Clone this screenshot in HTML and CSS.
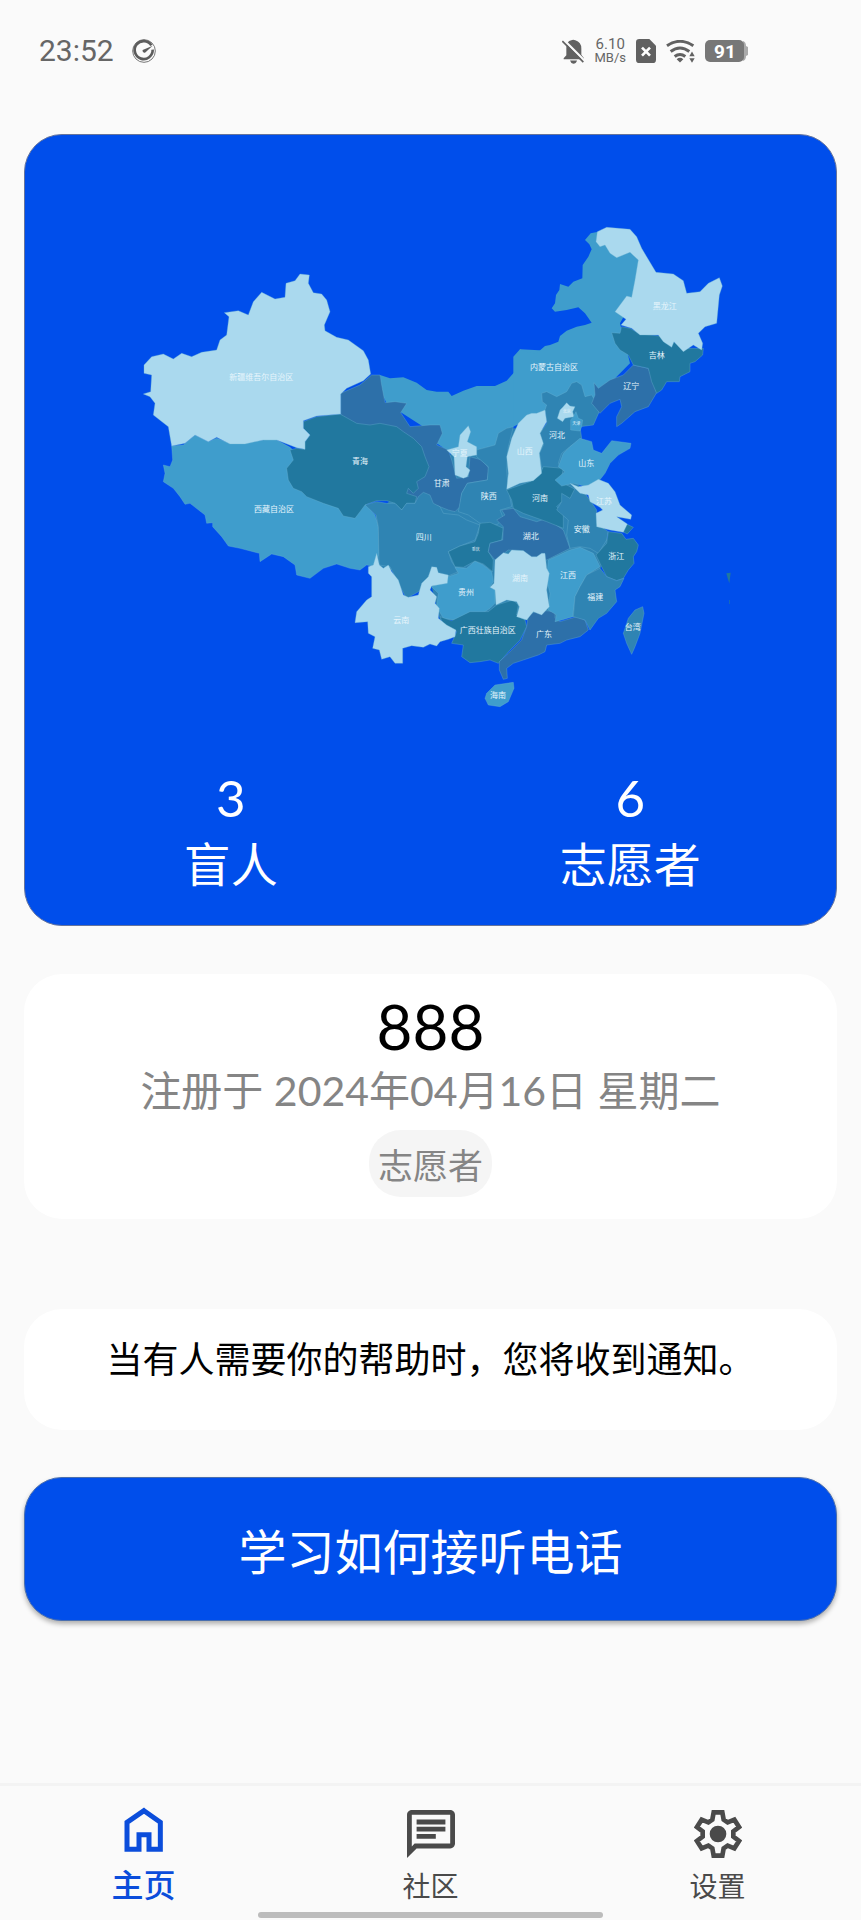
FILE: index.html
```html
<!DOCTYPE html>
<html lang="zh-CN">
<head>
<meta charset="utf-8">
<meta name="viewport" content="width=device-width, initial-scale=1">
<title>主页</title>
<link rel="stylesheet" href="styles.css">
</head>
<body>
<div class="screen">
  <header class="status">
    <time class="clock">23:52</time>
    <svg class="gauge" viewBox="0 0 72 72" aria-hidden="true">
      <circle cx="36" cy="36" r="34" fill="none" stroke="#777" stroke-width="3"/>
      <path d="M58 19A27 27 0 1 0 62 32" fill="none" stroke="#5c5c5c" stroke-width="8"/>
      <path d="M32 33L62 20L39 41A6 6 0 0 1 32 33Z" fill="#5c5c5c"/>
    </svg>
    <div class="indicators">
      <svg class="bell" viewBox="0 0 66 74" aria-hidden="true">
        <path d="M5 57L13 48V26Q13 6 28 3Q33 0 40 3Q58 8 58 28V47L66 57V60H5ZM24 64H45Q42 74 34 74Q27 73 24 64Z" fill="#616161"/>
        <path d="M4 1L66 63" stroke="#fafafa" stroke-width="7"/>
        <path d="M1 6L64 69" stroke="#616161" stroke-width="5"/>
      </svg>
      <div class="speed"><span class="rate">6.10</span><span class="unit">MB/s</span></div>
      <svg class="sim" viewBox="0 0 60 72" aria-hidden="true">
        <path d="M10 0H40L60 20V62Q60 72 50 72H10Q0 72 0 62V10Q0 0 10 0Z" fill="#616161"/>
        <path d="M18 26L42 50M42 26L18 50" stroke="#fff" stroke-width="8"/>
      </svg>
      <svg class="wifi" viewBox="0 0 87 68" aria-hidden="true">
        <path d="M3 17Q42-10 82 17M14 34Q42 13 70 34M26 49Q42 37 58 49" fill="none" stroke="#616161" stroke-width="9"/>
        <path d="M32 57Q42 49 52 57L42 67ZM70 48L78 34L86 48ZM70 54H86L78 68Z" fill="#616161"/>
      </svg>
      <svg class="battery" viewBox="0 0 43 22" role="img" aria-label="91%">
        <path d="M38 1Q41 2 41 6L43 7V15L41 16Q41 20 38 21Z" fill="#aaa"/>
        <rect width="39" height="22" rx="5" fill="#777"/>
        <text x="20" y="18" text-anchor="middle" class="charge">91</text>
      </svg>
    </div>
  </header>

  <main class="content">
    <section class="map-card">
      <svg class="map" viewBox="0 0 1830 1530" role="img" aria-label="中国地图">
        <g class="regions">
          <g transform="translate(750 450)">
            <path class="steel bare" d="M100 350L250 260 400 205 600 210 545 320 610 390 670 500 690 560 650 650 590 770 450 780 180 780 150 660-5 620-12 465Z"/>
            <path class="sky bare" d="M420-32L413 0 420 25 400 40 380 62 345 78 290 78 250 92 215 108 205 95 170 95 140 90 110 68 70 52 30 55 0 45 5 100 20 130 60 155 130 200 170 250 200 270 290 270 350 255 400 200 500 150 600 140 700 50 650-20Z"/>
          </g>
          <g transform="translate(1170 0)">
            <path class="sky bare" d="M235 65L212 70 195 90 208 103 215 118 205 140 188 165 187 205 160 215 145 230 120 222 118 240 108 255 105 280 95 295 105 305 140 300 175 292 195 310 215 338 195 345 170 350 140 362 120 378 115 395 90 405 75 408 50 430 25 428 0 418-20 440V640L100 600 210 570 230 560 330 460 300 340 350 250 360 140Z"/>
          </g>
          <g transform="translate(0 150)">
            <path class="sky" d="M125 558L160 555 195 525 235 545 260 535 300 550 340 550 400 540 440 540 480 562 520 600 660 700 710 735 735 765 745 800 747 880 735 920 710 915 690 930 660 925 620 912 580 925 540 955 500 945 495 915 460 890 425 882 390 905 388 880 330 865 295 858 275 830 248 800 248 788 230 790 225 765 180 730 165 733 150 710 130 685 100 665 105 640 100 615 120 620 128 600Z"/>
          </g>
          <g transform="translate(750 450)">
            <path class="navy" d="M-25 45H0L5 75 15 128 45 125 80 130 62 158 90 200 150 195 180 195 187 220 170 255 205 270 215 300 230 355 265 350 270 290 305 300 327 325 322 360 290 365 262 370 245 400 240 440 225 455 205 450 180 440 150 430 115 430 60 430-118 162V100L-60 75Z"/>
          </g>
          <g transform="translate(0 150)">
            <path class="teal" d="M520 485L560 470 630 462 680 490 720 495 750 490 800 500 820 515 850 535 875 560 885 590 897 620 885 650 860 665 865 685 850 700 835 685 830 700 860 710 855 730 830 730 815 750 795 730 770 722 740 722 705 735 690 755 675 775 640 768 625 745 580 730 530 710 515 695 490 685 475 660 470 625 490 600 480 570 500 565 525 568 525 545 540 525 520 505Z"/>
            <path class="pale" d="M510 42L538 45 535 70 550 98 575 102 590 120 600 155 583 195 585 212 620 232 655 240 700 272 715 300 722 342 700 362 650 385 632 402V462L560 468 520 482V505L540 525 525 545V568L500 563 440 540 400 540 345 552 300 552 260 532 235 545 195 525 165 550 125 558 115 500 70 465 75 430 60 410 40 402 62 395 65 345 42 340 42 315 65 290 100 282 130 297 155 280 185 290 215 277 260 270 270 240 290 225 297 170 283 158 325 152 355 165 370 125 395 97 435 117 465 112 468 70 495 62Z"/>
          </g>
          <g transform="translate(750 450)">
            <path class="steel" d="M-45 435L-10 425 20 430 45 430 65 450 80 430 105 430 115 410 130 397 150 405 160 430 180 440 190 460 235 465 260 480 300 495 285 540 240 558 205 575 215 605 235 635 200 650 150 640 125 690 80 715 60 680 30 620-3 615-5 500-12 465Z"/>
            <path class="sky" d="M205 650L175 672 155 680 175 700 170 740 190 775 225 780 270 760 300 765 330 745 345 730V690L330 680 340 665 335 635 310 615 285 603 260 625 225 622 235 640Z"/>
            <path class="teal" d="M180 770L215 782 270 755 325 755 350 735 400 720 415 735 410 765 435 780 440 800 420 840 390 870 355 910 330 900 300 905 270 908 245 890 250 855 215 850 230 815 190 795Z"/>
            <path class="navy" d="M445 765L475 750 525 755 525 775 540 785 590 770 615 780 625 810 600 830 560 840 540 850 500 855 495 875 475 885 430 900 400 910 380 925 382 955 370 958 358 930 358 905 385 880 425 840 440 800Z"/>
            <path class="steel" d="M400 200L380 205 355 220 345 255 290 270V290L325 320 322 360 262 370 245 400 235 455 265 465 300 490 350 495 370 475 360 450 395 440 385 385 380 330 385 260Z"/>
            <path class="pale" d="M265 197L272 215 262 245 290 260V285L262 290 258 320 270 330 262 350 250 355 225 345 222 290 200 270 235 260 240 225Z"/>
            <path class="teal" d="M300 490L330 487 370 505 365 540 330 550 325 575 340 600 338 635 310 612 285 603 250 622 225 620 205 575 240 558 285 545 295 520Z"/>
            <path class="navy" d="M365 450L400 445 420 470 470 485 500 475 550 510 570 565 540 580 500 600 450 592 430 572 385 570 345 600 325 575 330 550 368 540 370 500 350 480 375 465Z"/>
            <path class="steel" d="M485 100L500 95 530 110 560 95 575 70 590 65 605 75 615 110 635 105 650 130 660 150 640 195 600 200 605 235 570 260 545 280 535 310 550 330 485 325 478 280 490 255 480 220 500 190 495 150 500 135 487 125Z"/>
            <path class="teal" d="M380 390L450 365 480 345 490 320 550 325 545 350 530 360 570 380 610 400 545 425 530 440 550 460V505L500 485 430 460 400 445 395 420Z"/>
            <path class="pale" d="M495 150L500 185 480 220 490 250 478 280 485 340 460 362 420 370 380 388 385 340 380 290 395 235 415 190 440 165 455 160 470 160Z"/>
          </g>
          <g transform="translate(1170 0)">
            <path class="pale" d="M140 578L150 588 165 590 158 605 162 620 135 625 128 635 112 625 120 600 128 592Z"/>
            <path class="sky" d="M168 605L175 625 188 630 185 650 180 663 152 660V630L160 620Z"/>
            <path class="navy" d="M222 518L235 535 270 510 310 495 340 465 385 475 395 500 410 548 385 590 345 605 305 640 290 650 290 620 305 590 300 568 270 580 240 610 215 580 225 555Z"/>
            <path class="teal" d="M275 368L300 370 305 350 330 355 360 372 420 378 440 400 460 395 490 415 550 415 548 435 525 455 510 460 510 485 480 500 478 515 440 515 425 540 410 550 395 515 385 475 340 465 325 435 300 420 285 400Z"/>
            <path class="pale" d="M232 65L260 52 330 58 350 80 365 115 408 187 460 192 490 212 500 250 540 245 565 220 598 203 607 228 598 255 590 340 555 350 535 370 548 400 545 420 520 405 490 425 462 395 455 412 430 395 415 375 360 375 335 355 303 345 318 328 285 305 320 258 335 262 345 210 355 150 330 127 290 143 270 130 255 105 240 110 228 95Z"/>
          </g>
          <g transform="translate(1170 630)">
            <path class="sky" d="M180 55L215 65 220 90 245 100 275 62 333 70 330 85 295 105 270 130 255 160 235 185 200 200 160 190 125 198 105 180 135 155 115 140 130 100 150 80Z"/>
            <path class="steel" d="M125 220L150 235 165 205 190 215 210 240 230 270V310L265 335 260 360 235 400 210 385 180 380 150 385 140 345 145 300 110 270 125 245Z"/>
            <path class="teal" d="M265 335L305 340 318 358 340 355 355 375 350 395 340 410 342 430 325 450 310 475 290 482 260 470 240 430 228 405 260 370ZM320 312L340 322 322 342 308 335Z"/>
            <path class="pale" d="M150 190L175 200 205 195 235 178 265 190 285 215 300 255 335 285 332 298 290 290 322 312 310 337 270 330 230 320 228 280 248 270 240 262 210 245 205 225 180 220Z"/>
            <path class="sky" d="M150 390L180 382 220 400 240 440 200 465 180 500 165 530 158 590 125 600 105 605 110 585 85 570 90 520 80 480 85 420Z"/>
            <path class="steel" d="M240 445L260 470 290 482 312 475 300 500 285 510 290 545 260 580 235 595 210 630 195 600 160 590 165 530 180 500 200 465Z"/>
            <path class="steel" d="M345 570L368 560 372 580 360 640 345 680 335 703 320 670 310 640 325 595Z"/>
            <path class="teal bare" d="M619 460L632 458 628 490 624 478ZM628 540H630V552H628Z"/>
          </g>
          <g transform="translate(630 990)">
            <path class="pale" d="M110 40L118 75 130 85 145 75 155 95 175 120 190 165 205 172 235 165 245 130 265 110 275 80 290 82 295 98 325 105 322 130 275 138 270 150 290 170 285 190 298 205 295 235 320 255 348 270 345 290 325 298 300 305 290 318 270 312 250 322 215 317 188 325V370L165 370 150 350 125 358 118 330 98 325 105 290 85 280 83 245 45 248 50 215 80 180 95 170V110L85 100V80L100 75Z"/>
            <path class="pale" d="M465 60L490 38 505 42 515 30 550 32 575 50 590 50 605 40 615 40 620 85 628 100 620 150 628 200 605 225 580 215 560 240 530 230 538 200 530 185 500 180 468 195 465 150 450 142 462 130Z"/>
            <path class="sky" d="M440 460L465 435 520 427 522 445 505 485 480 500 445 495 435 475Z"/>
          </g>
        </g>
        <g class="names">
          <text x="394" y="510">新疆维吾尔自治区</text>
          <text x="432" y="907">西藏自治区</text>
          <text x="690" y="763">青海</text>
          <text x="1272" y="481">内蒙古自治区</text>
          <text x="1604" y="297">黑龙江</text>
          <text x="1580" y="445">吉林</text>
          <text x="1504" y="536">辽宁</text>
          <text x="1281" y="685">河北</text>
          <text class="tiny" x="1310" y="608">北京</text>
          <text class="tiny" x="1339" y="645">天津</text>
          <text x="1369" y="768">山东</text>
          <text x="1184" y="733">山西</text>
          <text x="989" y="739">宁夏</text>
          <text x="935" y="829">甘肃</text>
          <text x="1076" y="866">陕西</text>
          <text x="1230" y="872">河南</text>
          <text x="1422" y="881">江苏</text>
          <text x="1355" y="967">安徽</text>
          <text x="881" y="991">四川</text>
          <text x="1202" y="987">湖北</text>
          <text class="tiny" x="1037" y="1022">重庆</text>
          <text x="1459" y="1046">浙江</text>
          <text x="1170" y="1112">湖南</text>
          <text x="1314" y="1103">江西</text>
          <text x="1008" y="1155">贵州</text>
          <text x="1396" y="1170">福建</text>
          <text x="814" y="1240">云南</text>
          <text x="1073" y="1268">广西壮族自治区</text>
          <text x="1242" y="1281">广东</text>
          <text x="1508" y="1260">台湾</text>
          <text x="1104" y="1465">海南</text>
        </g>
      </svg>
      <dl class="stats">
        <div class="stat"><dd class="count">3</dd><dt class="role">盲人</dt></div>
        <div class="stat"><dd class="count">6</dd><dt class="role">志愿者</dt></div>
      </dl>
    </section>

    <section class="profile">
      <h1 class="name">888</h1>
      <p class="joined">注册于 2024年04月16日 星期二</p>
      <span class="badge">志愿者</span>
    </section>

    <p class="notice">当有人需要你的帮助时，您将收到通知。</p>

    <button class="learn" type="button">学习如何接听电话</button>
  </main>

  <nav class="tabs">
    <a class="tab active" href="#home" aria-current="page">
      <svg class="icon" viewBox="0 0 144 144" aria-hidden="true"><path d="M72 14L121 49V130H87V86H57V130H21V49Z" fill="none" stroke="#0b4ddb" stroke-width="15"/></svg>
      <span class="label">主页</span>
    </a>
    <a class="tab" href="#community">
      <svg class="icon" viewBox="2 2 20 20" aria-hidden="true"><path fill="#4a4a4a" d="M4 4h16v12H5.170L4 17.170V4m0-2c-1.100 0-1.990.9-1.990 2L2 22l4-4h14c1.100 0 2-.9 2-2V4c0-1.100-.9-2-2-2H4zm2 10h8v2H6v-2zm0-3h12v2H6V9zm0-3h12v2H6V6z"/></svg>
      <span class="label">社区</span>
    </a>
    <a class="tab" href="#settings">
      <svg class="icon" viewBox="701 120 144 144" aria-hidden="true"><path d="M760 127H786L790 149 802 157 822 149 836 171 819 184V200L836 213 822 235 802 227 790 235 786 257H760L756 235 744 227 724 235 710 213 727 200V184L710 171 724 149 744 157 756 149Z" fill="none" stroke="#4a4a4a" stroke-width="14"/><circle cx="773" cy="192" r="25" fill="#4a4a4a"/></svg>
      <span class="label">设置</span>
    </a>
    <span class="home-bar"></span>
  </nav>
</div>
</body>
</html>
```
FILE: styles.css
```css
* {
  box-sizing: border-box;
}

body {
  margin: 0;
  background: #fafafa;
  color: #000;
  font-family: "Noto Sans CJK SC", "Noto Sans", sans-serif;
}

h1, p, dl, dd {
  margin: 0;
  font-weight: 400;
}

.screen {
  display: flex;
  flex-direction: column;
  min-height: 100vh;
}

/* Status bar */
.status {
  display: flex;
  align-items: center;
  padding: 31px 113px 63px 39px;
  color: #666;
  font-family: Roboto, sans-serif;
}

.clock {
  font-size: 30px;
  line-height: 40px;
}

.gauge {
  width: 24px;
  height: 24px;
  margin-left: 18px;
}

.indicators {
  display: flex;
  align-items: center;
  gap: 10px;
  margin-left: auto;
}

.bell {
  width: 22px;
  height: 25px;
}

.speed {
  display: flex;
  flex-direction: column;
  align-items: center;
  line-height: 14px;
}

.rate {
  font-size: 15px;
}

.unit {
  font-size: 13px;
}

.sim {
  width: 20px;
  height: 24px;
}

.wifi {
  width: 29px;
  height: 23px;
}

.battery {
  width: 43px;
  height: 22px;
}

.charge {
  fill: #fff;
  font-size: 19px;
  font-weight: 700;
}

/* Cards */
.content {
  display: flex;
  flex-direction: column;
  padding: 0 24px;
}

.map-card {
  padding: 75px 6px 31px;
  border: 1px solid #66749c;
  border-radius: 38px;
  background: #004eeb;
}

.map {
  display: block;
  width: calc(100% - 189px);
  margin: 0 90px 0 99px;
}

.regions path {
  stroke: #6fb6d6;
  stroke-width: 1;
}

.regions .bare {
  stroke: none;
}

.sky {
  fill: #3f9dcc;
}

.navy {
  fill: #2d70a9;
}

.teal {
  fill: #21789f;
}

.steel {
  fill: #2f84b3;
}

.pale {
  fill: #aad9ee;
}

.names {
  fill: #e6f5fc;
  font-size: 24px;
  text-anchor: middle;
}

.tiny {
  font-size: 12px;
}

.stats {
  display: grid;
  grid-template-columns: 1fr 1fr;
  margin-top: 46px;
}

.stat {
  display: flex;
  flex-direction: column;
  color: #fff;
  text-align: center;
  line-height: 64px;
}

.count {
  font-family: Lato, sans-serif;
  font-size: 51px;
}

.role {
  font-size: 47px;
}

.profile {
  display: flex;
  flex-direction: column;
  align-items: center;
  margin-top: 48px;
  padding: 18px 16px 22px;
  border-radius: 38px;
  background: #fff;
}

.name {
  font-family: Lato, sans-serif;
  font-size: 62px;
  line-height: 68px;
}

.joined {
  color: #858585;
  font-family: Lato, "Noto Sans CJK SC", sans-serif;
  font-size: 41px;
  line-height: 62px;
}

.badge {
  margin-top: 8px;
  padding: 0 9px;
  border-radius: 32px;
  background: #f5f5f5;
  color: #858585;
  font-size: 35px;
  line-height: 67px;
}

.notice {
  margin-top: 90px;
  padding: 20px 16px 45px;
  border-radius: 38px;
  background: #fff;
  font-size: 36px;
  line-height: 56px;
  text-align: center;
}

.learn {
  margin-top: 47px;
  padding: 36px 16px;
  border: 1px solid #4a6fae;
  border-radius: 38px;
  background: #004eeb;
  box-shadow: 0 3px 5px rgba(0, 0, 0, 0.3);
  color: #fff;
  font-family: inherit;
  font-size: 48px;
  line-height: 70px;
}

/* Bottom navigation */
.tabs {
  position: relative;
  display: grid;
  grid-template-columns: 1fr 1fr 1fr;
  margin-top: auto;
  padding: 20px 0 16px;
  border-top: 3px solid #f3f3f3;
}

.tab {
  display: flex;
  flex-direction: column;
  align-items: center;
  justify-content: flex-end;
  gap: 8px;
  color: #4a4a4a;
  font-size: 28px;
  line-height: 38px;
  text-decoration: none;
}

.active {
  color: #0b4ddb;
  font-size: 32px;
  font-weight: 500;
  line-height: 42px;
}

.icon {
  width: 48px;
  height: 48px;
}

.home-bar {
  position: absolute;
  right: 30%;
  bottom: 2px;
  left: 30%;
  height: 6px;
  border-radius: 3px;
  background: #bcbcbc;
}
```
